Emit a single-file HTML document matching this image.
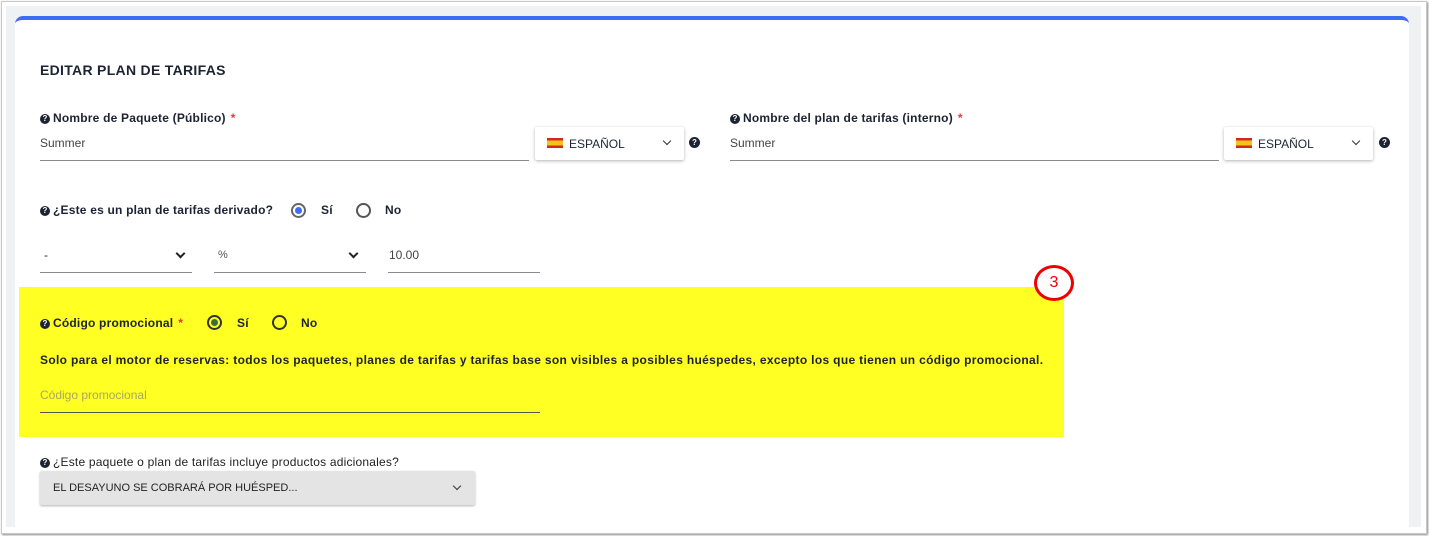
<!DOCTYPE html>
<html><head><meta charset="utf-8"><style>
*{box-sizing:border-box;margin:0;padding:0}
body{width:1429px;height:536px;background:#fff;font-family:"Liberation Sans",sans-serif;color:#1c2333;position:relative;overflow:hidden}
.frame{position:absolute;left:1px;top:1px;width:1426px;height:533px;border:1px solid #c8c8c8;box-shadow:1px 1px 2px #888;background:#fff}
.bg{position:absolute;left:6px;top:6px;width:1415px;height:521px;background:#f0f1f3}
.card{position:absolute;left:15px;top:16px;width:1394px;height:511px;background:#fff;border-top:4px solid #3b6ef5;border-radius:8px 8px 0 0}
.a{position:absolute;white-space:nowrap}
.lbl{font-size:12px;font-weight:bold;color:#1c2333;letter-spacing:.2px}
.q{display:inline-block;width:10px;height:10px;border-radius:50%;background:#1c2333;color:#fff;font-size:8px;line-height:10px;text-align:center;font-weight:bold;vertical-align:1px;margin-right:3px;letter-spacing:0}
.qb{position:absolute;width:11px;height:11px;border-radius:50%;background:#1c2333;color:#fff;font-size:8px;line-height:11px;text-align:center;font-weight:bold}
.star{color:#e53935;margin-left:5px}
.line{position:absolute;height:1px;background:#8a8a8a}
.sel{position:absolute;background:#fff;box-shadow:0 1px 3px rgba(0,0,0,.3);border-radius:2px;font-size:12px}
.flag{position:absolute;left:12px;top:11px;width:16px;height:10px;background:linear-gradient(#d42a1e 0 25%,#f6c416 25% 75%,#d42a1e 75%)}
.radio{position:absolute;width:15px;height:15px;border-radius:50%;border:2px solid #555;background:transparent}
.radio.on::after{content:"";position:absolute;left:2px;top:2px;width:7px;height:7px;border-radius:50%;background:#3b6ef5}
.chev{position:absolute;width:7px;height:7px;border-right:1.5px solid #333;border-bottom:1.5px solid #333;transform:rotate(45deg)}
</style></head><body>
<div class="frame"></div>
<div class="bg"></div>
<div class="card"></div>

<div class="a" style="left:40px;top:62px;font-size:14px;font-weight:bold;letter-spacing:.3px">EDITAR PLAN DE TARIFAS</div>

<div class="a lbl" style="left:40px;top:111px"><span class="q">?</span>Nombre de Paquete (Público)<span class="star">*</span></div>
<div class="a" style="left:40px;top:136px;font-size:12px;color:#444">Summer</div>
<div class="line" style="left:40px;top:160px;width:489px"></div>
<div class="sel" style="left:535px;top:127px;width:149px;height:33px"><div class="flag"></div><div class="a" style="left:34px;top:10px;font-size:12px">ESPAÑOL</div><div class="chev" style="left:129px;top:11px;width:6px;height:6px;border-width:1px"></div></div>
<div class="qb" style="left:689px;top:137px">?</div>

<div class="a lbl" style="left:730px;top:111px"><span class="q">?</span>Nombre del plan de tarifas (interno)<span class="star">*</span></div>
<div class="a" style="left:730px;top:136px;font-size:12px;color:#444">Summer</div>
<div class="line" style="left:730px;top:160px;width:489px"></div>
<div class="sel" style="left:1224px;top:127px;width:149px;height:33px"><div class="flag"></div><div class="a" style="left:34px;top:10px;font-size:12px">ESPAÑOL</div><div class="chev" style="left:129px;top:11px;width:6px;height:6px;border-width:1px"></div></div>
<div class="qb" style="left:1379px;top:137px">?</div>

<div class="a lbl" style="left:40px;top:203px"><span class="q">?</span>¿Este es un plan de tarifas derivado?</div>
<div class="radio on" style="left:291px;top:203px;border-color:#666"></div>
<div class="a lbl" style="left:321px;top:203px">Sí</div>
<div class="radio" style="left:356px;top:203px"></div>
<div class="a lbl" style="left:385px;top:203px">No</div>

<div class="a" style="left:44px;top:248px;font-size:12px">-</div>
<div class="chev" style="left:177px;top:250px;border-width:2.5px;border-color:#222"></div>
<div class="line" style="left:40px;top:272px;width:152px"></div>
<div class="a" style="left:218px;top:249px;font-size:11px;color:#555">%</div>
<div class="chev" style="left:350px;top:250px;border-width:2.5px;border-color:#222"></div>
<div class="line" style="left:214px;top:272px;width:152px"></div>
<div class="a" style="left:389px;top:248px;font-size:12px;color:#444">10.00</div>
<div class="line" style="left:388px;top:272px;width:152px"></div>

<div class="a" style="left:19px;top:287px;width:1045px;height:150px;background:#ffff24"></div>
<div class="a" style="left:1034px;top:265px;width:40px;height:36px;border:3px solid #e00;border-radius:50%;background:#fff;text-align:center;font-size:16px;line-height:30px;color:#e00">3</div>

<div class="a lbl" style="left:40px;top:316px"><span class="q">?</span>Código promocional<span class="star">*</span></div>
<div class="radio" style="left:207px;top:315px;border-color:#333"><div style="position:absolute;left:2px;top:2px;width:7px;height:7px;border-radius:50%;background:#3b6e32"></div></div>
<div class="a lbl" style="left:237px;top:316px">Sí</div>
<div class="radio" style="left:272px;top:315px;border-color:#333"></div>
<div class="a lbl" style="left:301px;top:316px">No</div>
<div class="a lbl" style="left:40px;top:353px;letter-spacing:.33px">Solo para el motor de reservas: todos los paquetes, planes de tarifas y tarifas base son visibles a posibles huéspedes, excepto los que tienen un código promocional.</div>
<div class="a" style="left:40px;top:388px;font-size:12px;color:#a8a860">Código promocional</div>
<div class="line" style="left:40px;top:412px;width:500px;background:#555"></div>

<div class="a lbl" style="left:40px;top:455px;font-weight:normal;color:#222"><span class="q">?</span>¿Este paquete o plan de tarifas incluye productos adicionales?</div>
<div class="a" style="left:40px;top:471px;width:435px;height:34px;background:#e4e4e4;box-shadow:0 1px 2px rgba(0,0,0,.3);border-radius:2px"></div>
<div class="a" style="left:53px;top:482px;font-size:11px;color:#222">EL DESAYUNO SE COBRARÁ POR HUÉSPED...</div>
<div class="chev" style="left:454px;top:483px;width:6px;height:6px;border-width:1px"></div>
</body></html>
